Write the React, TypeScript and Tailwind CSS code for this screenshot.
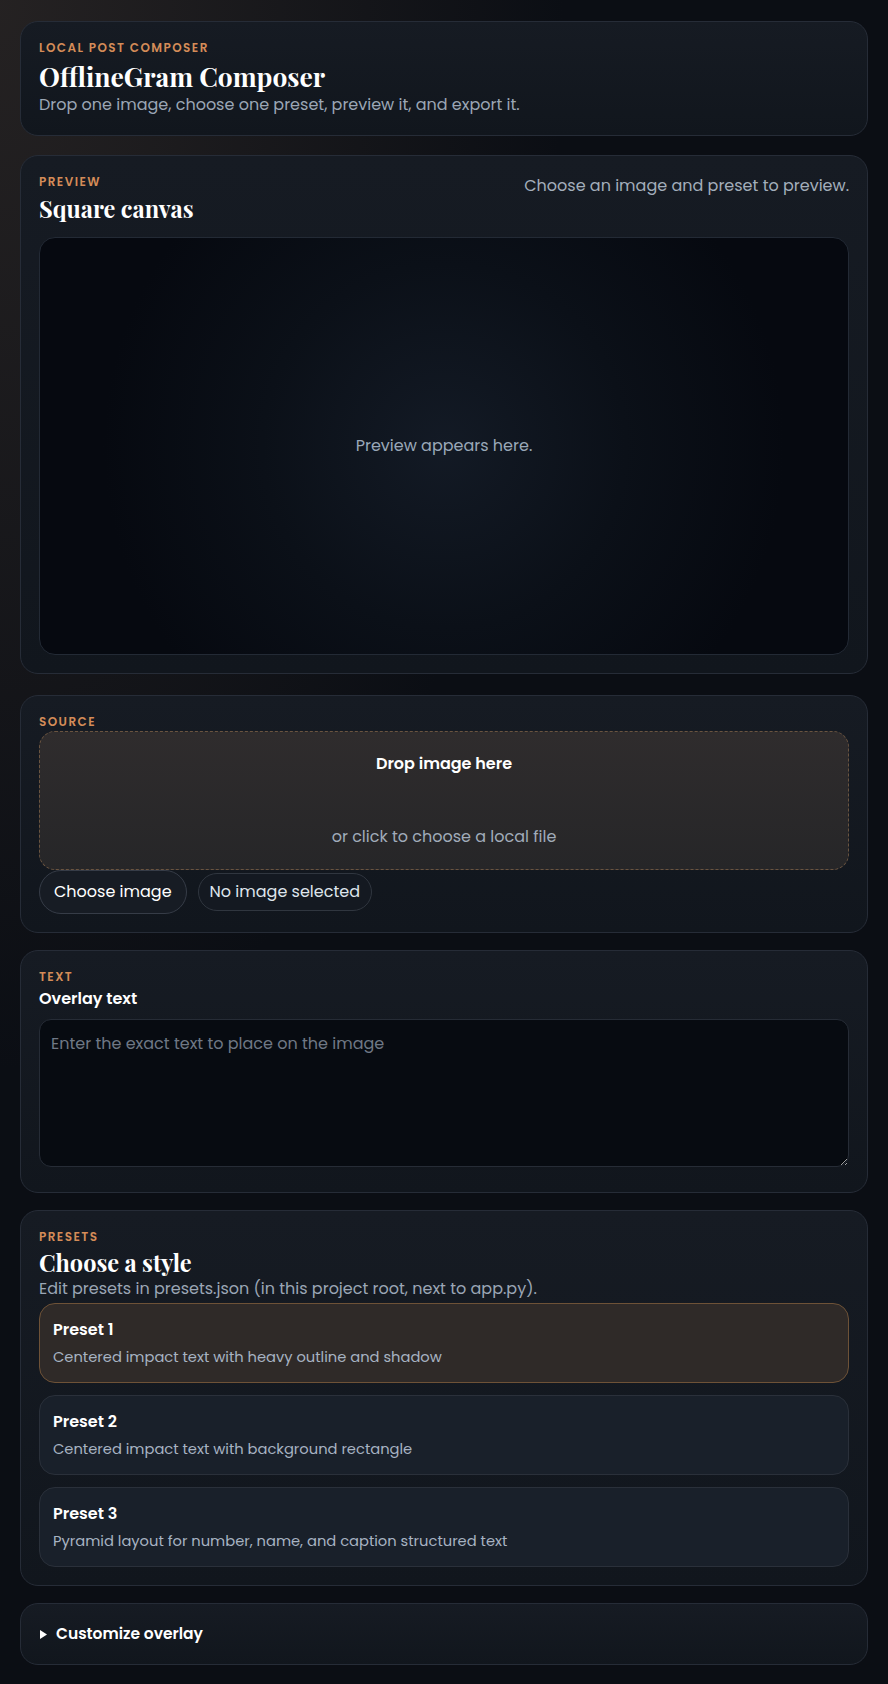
import React, { useState } from 'react'

const presets = [
  { id: 1, name: 'Preset 1', description: 'Centered impact text with heavy outline and shadow' },
  { id: 2, name: 'Preset 2', description: 'Centered impact text with background rectangle' },
  { id: 3, name: 'Preset 3', description: 'Pyramid layout for number, name, and caption structured text' },
]

const sans = "font-['Poppins','Inter','Noto_Sans',sans-serif]"
const serif = "font-['Playfair_Display','Liberation_Serif',serif]"

const Eyebrow: React.FC<{ children: React.ReactNode }> = ({ children }) => (
  <p className="text-[12px] leading-4 font-semibold uppercase tracking-[0.12em] text-[#d48c58]">{children}</p>
)

const Card: React.FC<{ className?: string; children: React.ReactNode }> = ({ className = '', children }) => (
  <section
    className={`rounded-[18px] border border-[#262c37] bg-gradient-to-b from-[#161b23] to-[#11161d] p-[18px] ${className}`}
  >
    {children}
  </section>
)

const App: React.FC = () => {
  const [selected, setSelected] = useState(1)
  const [text, setText] = useState('')

  return (
    <div
      className={`min-h-screen bg-[#0b0e14] bg-[radial-gradient(ellipse_at_top_left,rgba(58,50,46,0.55),rgba(11,14,20,0)_45%)] px-5 pt-[21px] pb-[19px] text-[#e7ebf0] ${sans}`}
    >
      {/* Header */}
      <Card>
        <Eyebrow>Local post composer</Eyebrow>
        <h1 className={`mt-[3px] text-[26.4px] leading-[34px] font-bold text-white ${serif}`}>OfflineGram Composer</h1>
        <p className="text-[16px] leading-6 text-[#9ba6b5]">Drop one image, choose one preset, preview it, and export it.</p>
      </Card>

      {/* Preview */}
      <Card className="mt-[19px]">
        <div className="flex items-start justify-between">
          <div>
            <Eyebrow>Preview</Eyebrow>
            <h2 className={`mt-[3px] text-[23.5px] leading-[32px] font-bold text-white ${serif}`}>Square canvas</h2>
          </div>
          <p className="text-[16px] leading-6 text-[#a3aebb]">Choose an image and preset to preview.</p>
        </div>
        <div className="mt-3 flex h-[418px] items-center justify-center rounded-2xl border border-[#232a35] bg-[#060910] bg-[radial-gradient(circle_at_center,#131a25_0%,#0b1018_40%,#060910_75%)]">
          <p className="text-[16px] text-[#9aa8b8]">Preview appears here.</p>
        </div>
      </Card>

      {/* Source */}
      <Card className="mt-[21px]">
        <Eyebrow>Source</Eyebrow>
        <div className="mt-px flex h-[139px] cursor-pointer flex-col items-center justify-between rounded-2xl border border-dashed border-[#6a5440] bg-gradient-to-b from-[#2f2c2d] to-[#262628] py-[22px]">
          <p className="text-[16px] leading-5 font-semibold text-white">Drop image here</p>
          <p className="text-[16px] leading-5 text-[#a1acba]">or click to choose a local file</p>
        </div>
        <div className="flex items-center gap-[11px]">
          <button className="h-11 rounded-full border border-[#363c47] bg-[#171c24] px-[14px] text-[16px] text-white">
            Choose image
          </button>
          <span className="flex h-[38px] items-center rounded-full border border-[#30363f] bg-[#141921] px-[11px] text-[16px] text-[#dfe5ec]">
            No image selected
          </span>
        </div>
      </Card>

      {/* Text */}
      <Card className="mt-[17px]">
        <Eyebrow>Text</Eyebrow>
        <label className="mt-[3px] block text-[16px] leading-[22px] font-semibold text-white">Overlay text</label>
        <textarea
          value={text}
          onChange={e => setText(e.target.value)}
          placeholder="Enter the exact text to place on the image"
          className="mt-[9px] mb-[7px] block h-[148px] w-full rounded-xl border border-[#262c36] bg-[#070b11] px-[11px] py-3 text-[16px] leading-6 text-white outline-none placeholder:text-[#6f7885]"
        />
      </Card>

      {/* Presets */}
      <Card className="mt-[17px]">
        <Eyebrow>Presets</Eyebrow>
        <h2 className={`mt-[3px] text-[23.5px] leading-[30px] font-bold text-white ${serif}`}>Choose a style</h2>
        <p className="text-[16px] leading-[22px] text-[#9ba6b5]">
          Edit presets in presets.json (in this project root, next to app.py).
        </p>
        <div className="mt-[3px] flex flex-col gap-3">
          {presets.map(preset => {
            const active = preset.id === selected
            return (
              <button
                key={preset.id}
                onClick={() => setSelected(preset.id)}
                className={`rounded-2xl border px-[13px] py-[15px] text-left ${
                  active ? 'border-[#6e5237] bg-[#2f2a28]' : 'border-[#2a303a] bg-[#19202a]'
                }`}
              >
                <p className="text-[16px] leading-[22px] font-semibold text-white">{preset.name}</p>
                <p className="mt-[6px] text-[14.7px] leading-5 text-[#a7b3c2]">{preset.description}</p>
              </button>
            )
          })}
        </div>
      </Card>

      {/* Customize */}
      <Card className="mt-[17px]">
        <div className="flex h-6 items-center gap-[9px]">
          <svg width="7" height="9" viewBox="0 0 7 9" className="ml-px">
            <path d="M0 0 L7 4.5 L0 9 Z" fill="#ffffff" />
          </svg>
          <span className="text-[15.5px] font-semibold text-white">Customize overlay</span>
        </div>
      </Card>
    </div>
  )
}

export default App
